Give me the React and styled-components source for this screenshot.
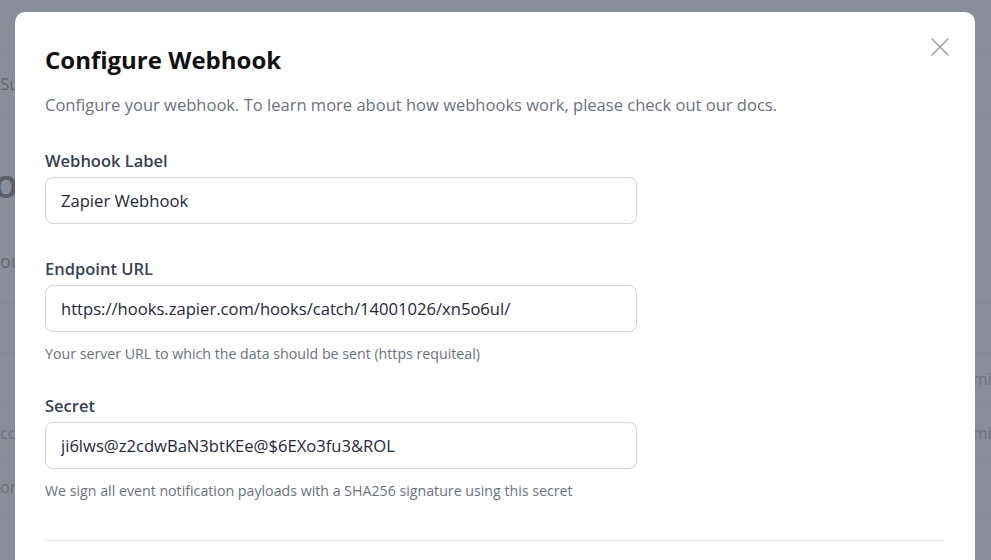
import React from "react";
import styled, { createGlobalStyle } from "styled-components";

const Global = createGlobalStyle`
  html, body { margin: 0; padding: 0; background: #ffffff; }
  body { font-family: "Open Sans", "Noto Sans", sans-serif; overflow: hidden; }
  * { box-sizing: border-box; }
`;

const Page = styled.div`
  width: 991px;
  height: 560px;
  overflow: hidden;
  display: flex;
  flex-direction: column;
  color: #374151;
`;

const Header = styled.div`
  height: 50px;
  border-bottom: 1px solid #e5e7eb;
  flex-shrink: 0;
`;

const Tabs = styled.div`
  height: 68px;
  border-bottom: 1px solid #e5e7eb;
  display: flex;
  align-items: center;
  font-size: 17px;
  color: #374151;
  flex-shrink: 0;
`;

const PageHeading = styled.div`
  margin-top: 48px;
  font-size: 30px;
  font-weight: 700;
  color: #111827;
  margin-left: -6px;
`;

const PageSub = styled.div`
  margin-top: 42px;
  font-size: 18px;
  color: #374151;
  margin-left: -10px;
  padding-bottom: 30px;
  border-bottom: 1px solid #e5e7eb;
`;

const Table = styled.div`
  margin-top: 48px;
  display: flex;
  flex-direction: column;
`;

const TRow = styled.div`
  height: 54px;
  border-bottom: 1px solid #e5e7eb;
  display: flex;
  align-items: center;
  justify-content: space-between;
  font-size: 16px;
  color: #6b7280;
  margin-right: -18px;
  &:first-child { border-top: 1px solid #e5e7eb; }
`;

const Overlay = styled.div`
  position: fixed;
  inset: 0;
  background: rgba(107, 114, 128, 0.8);
  display: flex;
  justify-content: flex-start;
  align-items: flex-start;
  padding: 12px 0 0 15px;
`;

const Modal = styled.div`
  position: relative;
  width: 960px;
  min-height: 620px;
  background: #ffffff;
  border-radius: 10px;
  padding: 30px 30px 0 30px;
  display: flex;
  flex-direction: column;
`;

const Close = styled.button`
  position: absolute;
  top: 25px;
  right: 25px;
  width: 20px;
  height: 20px;
  padding: 0;
  border: 0;
  background: transparent;
  color: #9ca3af;
  display: flex;
  align-items: center;
  justify-content: center;
  cursor: pointer;
`;

const Title = styled.h2`
  margin: 0;
  font-size: 24px;
  line-height: 36px;
  font-weight: 700;
  color: #111111;
`;

const Description = styled.p`
  margin: 14px 0 0 0;
  font-size: 16.55px;
  line-height: 26px;
  color: #6b7280;
`;

const Form = styled.div`
  margin-top: 31px;
  display: flex;
  flex-direction: column;
  gap: 33px;
`;

const Field = styled.div`
  display: flex;
  flex-direction: column;
`;

const Label = styled.label`
  font-size: 16.5px;
  line-height: 24px;
  font-weight: 600;
  color: #374151;
  margin-bottom: 4px;
`;

const Input = styled.input`
  width: 592px;
  height: 47px;
  border: 1px solid #d1d5db;
  border-radius: 8px;
  padding: 0 15px;
  font-family: inherit;
  font-size: 16.6px;
  color: #1f2937;
  background: #ffffff;
  outline: none;
`;

const Help = styled.div`
  margin-top: 15px;
  font-size: 14.2px;
  line-height: 14px;
  color: #6b7280;
`;

const Divider = styled.div`
  margin-top: 42px;
  height: 1px;
  background: #e5e7eb;
`;

export default function App() {
  return (
    <>
      <Global />
      <Page>
        <Header />
        <Tabs>Surveys</Tabs>
        <PageHeading>Outgoing</PageHeading>
        <PageSub>Your webhooks</PageSub>
        <Table>
          <TRow><span /><span>mins</span></TRow>
          <TRow><span>cc</span><span>mins</span></TRow>
          <TRow><span>or</span><span /></TRow>
        </Table>
      </Page>
      <Overlay>
        <Modal role="dialog">
          <Close aria-label="Close">
            <svg width="18" height="18" viewBox="0 0 18 18" fill="none" stroke="currentColor" strokeWidth="1.6" strokeLinecap="round">
              <path d="M1 1 L17 17 M17 1 L1 17" />
            </svg>
          </Close>
          <Title>Configure Webhook</Title>
          <Description>Configure your webhook. To learn more about how webhooks work, please check out our docs.</Description>
          <Form>
            <Field>
              <Label>Webhook Label</Label>
              <Input defaultValue="Zapier Webhook" />
            </Field>
            <Field>
              <Label>Endpoint URL</Label>
              <Input defaultValue="https://hooks.zapier.com/hooks/catch/14001026/xn5o6ul/" />
              <Help>Your server URL to which the data should be sent (https requiteal)</Help>
            </Field>
            <Field>
              <Label>Secret</Label>
              <Input defaultValue="ji6lws@z2cdwBaN3btKEe@$6EXo3fu3&ROL" />
              <Help>We sign all event notification payloads with a SHA256 signature using this secret</Help>
            </Field>
          </Form>
          <Divider />
        </Modal>
      </Overlay>
    </>
  );
}
